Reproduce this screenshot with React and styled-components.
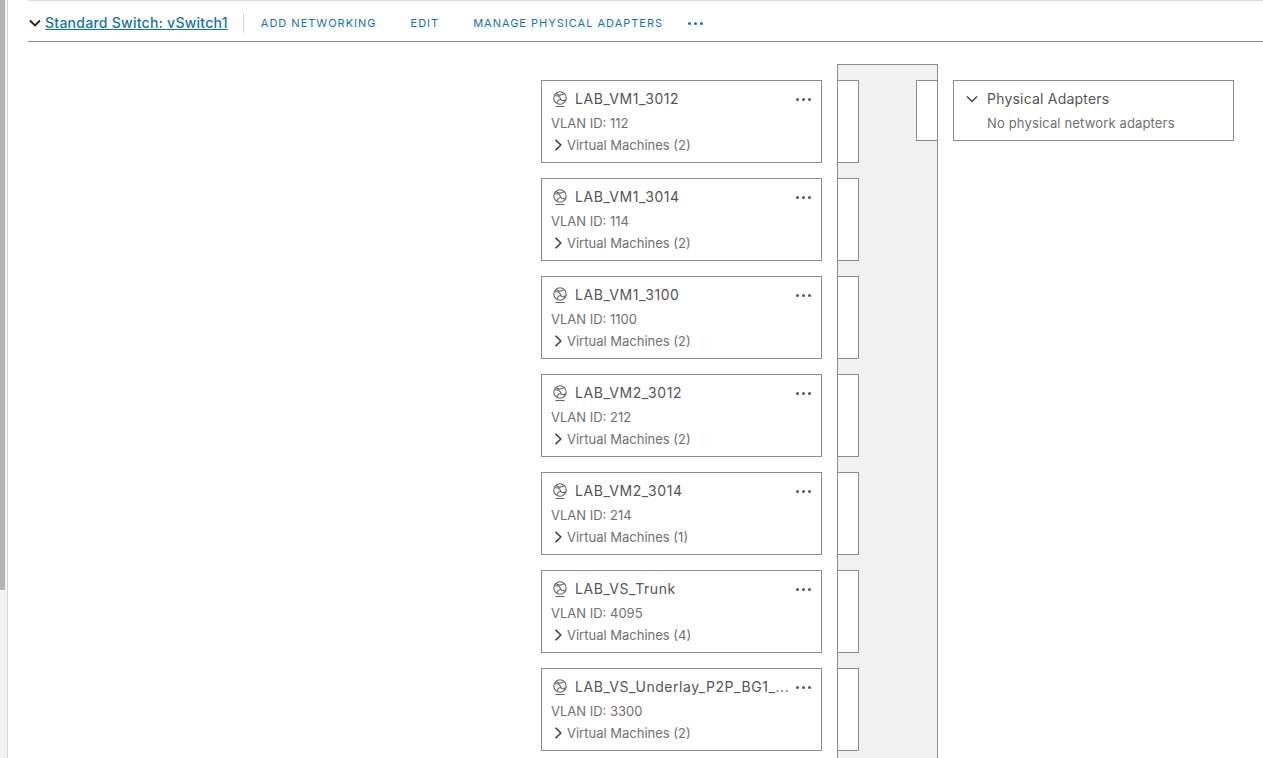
import React from "react";
import styled, { createGlobalStyle } from "styled-components";

const Global = createGlobalStyle`
  html, body { margin: 0; padding: 0; height: 100%; background: #fff; overflow: hidden; }
  body { font-family: Inter, "Liberation Sans", sans-serif; color: #565656; }
`;

const Page = styled.div`
  display: flex;
  height: 758px;
  overflow: hidden;
`;
const Rail = styled.div`
  flex: none;
  width: 8px;
  background: #f2f2f2;
  border-right: 1px solid #d8d8d8;
  box-sizing: border-box;
`;
const RailThumb = styled.div`
  width: 5px;
  height: 590px;
  background: #b5b5b5;
`;
const Main = styled.div`
  flex: 1;
  min-width: 0;
  padding-left: 20px;
`;
const Header = styled.header`
  display: flex;
  align-items: center;
  height: 42px;
  box-sizing: border-box;
  padding-top: 4px;
  border-top: 1px solid #dcdcdc;
  border-bottom: 1px solid #8c8c8c;
`;
const Toggle = styled.span`
  display: flex;
  width: 16px;
  margin-left: 1px;
  color: #222;
`;
const Title = styled.a`
  font-size: 14px;
  font-weight: 500;
  letter-spacing: 0.26px;
  color: #0f76a8;
  text-decoration: underline;
  padding-right: 15px;
  border-right: 1px solid #d8d8d8;
  line-height: 20px;
`;
const Action = styled.a`
  font-size: 11px;
  letter-spacing: 1px;
  color: #0f76a8;
  margin-left: ${(p) => p.$gap}px;
`;
const Dots = styled.span`
  display: flex;
  gap: 3px;
  margin-left: ${(p) => p.$gap || 0}px;
  margin-right: ${(p) => p.$end || 0}px;
`;
const Dot = styled.i`
  width: 3px;
  height: 3px;
  border-radius: 50%;
  background: ${(p) => p.$color};
`;
const Diagram = styled.div`
  display: flex;
  gap: 15px;
  padding: 22px 0 0 513px;
`;
const Cards = styled.div`
  flex: none;
  width: 281px;
  display: flex;
  flex-direction: column;
  gap: 15px;
  padding-top: 16px;
`;
const Card = styled.section`
  height: 83px;
  box-sizing: border-box;
  border: 1px solid #8c8c8c;
  padding: 8px 9px 0 9px;
  flex: none;
`;
const CardTop = styled.div`
  display: flex;
  align-items: center;
  height: 20px;
`;
const Globe = styled.svg`
  flex: none;
  width: 16px;
  height: 17px;
  margin: 0 7px 0 1px;
`;
const Name = styled.div`
  flex: 1;
  min-width: 0;
  font-size: 14px;
  letter-spacing: 0.56px;
  line-height: 20px;
  color: #555;
  white-space: nowrap;
`;
const Line = styled.div`
  font-size: 13px;
  line-height: 18px;
  margin-top: ${(p) => p.$top || 0}px;
  color: #707070;
`;
const Expand = styled(Line)`
  display: flex;
  align-items: center;
  gap: 3px;
  margin-top: 4px;
  padding-left: 1px;
`;
const Switch = styled.div`
  flex: none;
  width: 101px;
  height: 720px;
  box-sizing: border-box;
  background: #f1f1f1;
  border: 1px solid #8c8c8c;
  border-bottom: none;
  display: flex;
  justify-content: space-between;
  padding-top: 15px;
`;
const Stubs = styled.div`
  display: flex;
  flex-direction: column;
  gap: 15px;
  width: 21px;
`;
const Stub = styled.div`
  height: 83px;
  flex: none;
  box-sizing: border-box;
  background: #fff;
  border: 1px solid #8c8c8c;
  border-left: none;
`;
const Uplink = styled.div`
  width: 21px;
  height: 61px;
  box-sizing: border-box;
  background: #fff;
  border: 1px solid #8c8c8c;
  border-right: none;
`;
const Adapters = styled.section`
  flex: none;
  align-self: flex-start;
  width: 281px;
  height: 61px;
  margin-top: 16px;
  box-sizing: border-box;
  border: 1px solid #8c8c8c;
  padding: 8px 10px 0 12px;
`;
const AdapterTitle = styled.div`
  display: flex;
  align-items: center;
  gap: 9px;
  font-size: 14px;
  letter-spacing: 0.2px;
  line-height: 20px;
  color: #555;
`;
const AdapterNote = styled(Line)`
  margin: 5px 0 0 21px;
  letter-spacing: 0.15px;
`;

const Chevron = ({ dir, size = 12, color = "#333", w = 1.7 }) => (
  <svg width={size} height={size} viewBox="0 0 12 12" fill="none" stroke={color} strokeWidth={w} style={{ flex: "none" }}>
    {dir === "down" ? <path d="M1 3.5 L6 8.5 L11 3.5" /> : <path d="M3.5 0.8 L8.8 6 L3.5 11.2" />}
  </svg>
);

const groups = [
  ["LAB_VM1_3012", 112, 2],
  ["LAB_VM1_3014", 114, 2],
  ["LAB_VM1_3100", 1100, 2],
  ["LAB_VM2_3012", 212, 2],
  ["LAB_VM2_3014", 214, 1],
  ["LAB_VS_Trunk", 4095, 4],
  ["LAB_VS_Underlay_P2P_BG1_...", 3300, 2],
];

const More = ({ color, gap, end }) => (
  <Dots $gap={gap} $end={end}>
    <Dot $color={color} />
    <Dot $color={color} />
    <Dot $color={color} />
  </Dots>
);

export default function App() {
  return (
    <Page>
      <Global />
      <Rail>
        <RailThumb />
      </Rail>
      <Main>
        <Header>
          <Toggle>
            <Chevron dir="down" size={12} color="#222" w={1.8} />
          </Toggle>
          <Title>Standard Switch: vSwitch1</Title>
          <Action $gap={17}>ADD NETWORKING</Action>
          <Action $gap={34}>EDIT</Action>
          <Action $gap={34}>MANAGE PHYSICAL ADAPTERS</Action>
          <More color="#0f76a8" gap={25} />
        </Header>
        <Diagram>
          <Cards>
            {groups.map(([name, vlan, vms]) => (
              <Card key={name}>
                <CardTop>
                  <Globe viewBox="0 0 16 17" fill="none" stroke="#666" strokeWidth="1.1">
                    <circle cx="8" cy="7" r="6.2" />
                    <path d="M2.4 5 C6 4 8 6 9 8.5 C10 10.5 12 10 14 8.5 M4 2.5 C6 4.5 9 4.5 12 2.8 M5 12.4 C5.5 9.5 7 8.5 9 8.5" />
                    <path d="M3.5 15.5 H12.5" />
                  </Globe>
                  <Name>{name}</Name>
                  <More color="#555" end={1} />
                </CardTop>
                <Line $top={5}>VLAN ID: {vlan}</Line>
                <Expand>
                  <Chevron dir="right" size={12} color="#444" w={1.6} />
                  <span>Virtual Machines ({vms})</span>
                </Expand>
              </Card>
            ))}
          </Cards>
          <Switch>
            <Stubs>
              {groups.map(([name]) => (
                <Stub key={name} />
              ))}
            </Stubs>
            <Uplink />
          </Switch>
          <Adapters>
            <AdapterTitle>
              <Chevron dir="down" size={12} color="#444" w={1.5} />
              Physical Adapters
            </AdapterTitle>
            <AdapterNote>No physical network adapters</AdapterNote>
          </Adapters>
        </Diagram>
      </Main>
    </Page>
  );
}
